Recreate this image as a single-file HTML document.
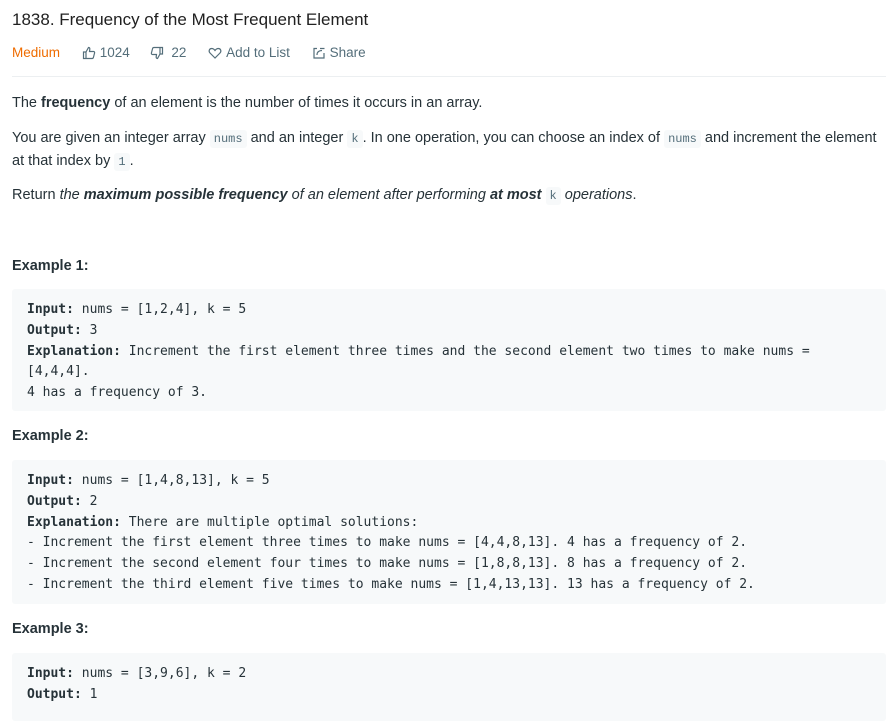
<!DOCTYPE html>
<html><head><meta charset="utf-8"><style>
body{margin:0;width:891px;height:721px;overflow:hidden;background:#fff;font-family:"Liberation Sans",sans-serif;color:#263238;}
.abs{position:absolute;}
.t{left:12px;top:10px;font-size:17px;font-weight:500;color:#212121;}
.meta{left:12px;top:45px;font-size:13.5px;color:#546e7a;display:flex;align-items:center;white-space:nowrap;}
.meta span{display:inline-flex;align-items:center;}
.sep{left:12px;top:76px;width:874px;height:1px;background:#eceff1;}
p{position:absolute;left:12px;margin:0;font-size:14.5px;line-height:22px;width:874px;}
code{font-family:"Liberation Mono",monospace;font-size:12px;background:#f7f9fa;color:#546e7a;padding:2px 4px;border-radius:3px;}
h4{position:absolute;left:12px;margin:0;font-size:14.5px;font-weight:bold;}
pre{position:absolute;left:12px;width:812px;margin:0;padding:11px 47px 7px 15px;background:#f7f9fa;font-family:"DejaVu Sans Mono",monospace;font-size:13px;line-height:20.8px;color:#263238;white-space:pre-wrap;border-radius:3px;}
pre b{font-weight:bold;}
</style></head><body>
<div class="abs t">1838. Frequency of the Most Frequent Element</div>
<div class="abs meta">
<span style="color:#ef6c00;margin-right:22px">Medium</span>
<span style="margin-right:20px"><svg width="14" height="14" viewBox="0 0 14 14" fill="none" stroke="#546e7a" stroke-width="1.2"><path d="M1.5 6h2.5v6.5H1.5z M4 6l2.5-4.5c1 0 1.5.7 1.3 1.7L7.5 5.5h4c.8 0 1.3.7 1.1 1.4l-1.2 4.6c-.2.6-.7 1-1.3 1H4"/></svg>&nbsp;1024</span>
<span style="margin-right:22px"><svg width="14" height="14" viewBox="0 0 14 14" fill="none" stroke="#546e7a" stroke-width="1.2"><path d="M12.5 8h-2.5V1.5h2.5z M10 8l-2.5 4.5c-1 0-1.5-.7-1.3-1.7L6.5 8.5h-4c-.8 0-1.3-.7-1.1-1.4l1.2-4.6c.2-.6.7-1 1.3-1H10"/></svg>&nbsp;&nbsp;22</span>
<span style="margin-right:22px"><svg width="14" height="14" viewBox="0 0 14 14" fill="none" stroke="#546e7a" stroke-width="1.2"><path d="M7 12L2 7C0.5 5.5 1 2.5 3.7 2.5 5.2 2.5 6.3 3.5 7 4.5 7.7 3.5 8.8 2.5 10.3 2.5 13 2.5 13.5 5.5 12 7z"/></svg>&nbsp;Add to List</span>
<span><svg width="14" height="14" viewBox="0 0 14 14" fill="none" stroke="#546e7a" stroke-width="1.2"><path d="M5 2.5H2v9.5h10V7 M8 2.5h4.5 M5 9c0-3 2-4.5 5-4.5"/></svg>&nbsp;Share</span>
</div>
<div class="abs sep"></div>
<p style="top:92px">The <b>frequency</b> of an element is the number of times it occurs in an array.</p>
<p style="top:127px">You are given an integer array <code>nums</code> and an integer <code>k</code>. In one operation, you can choose an index of <code>nums</code> and increment the element at that index by <code>1</code>.</p>
<p style="top:184px">Return <i>the <b>maximum possible frequency</b> of an element after performing <b>at most</b> </i><code>k</code><i> operations</i>.</p>
<h4 style="top:258px">Example 1:</h4>
<pre style="top:289px;height:104px"><b>Input:</b> nums = [1,2,4], k = 5
<b>Output:</b> 3
<b>Explanation:</b> Increment the first element three times and the second element two times to make nums =
[4,4,4].
4 has a frequency of 3.</pre>
<h4 style="top:428px">Example 2:</h4>
<pre style="top:460px;height:126px"><b>Input:</b> nums = [1,4,8,13], k = 5
<b>Output:</b> 2
<b>Explanation:</b> There are multiple optimal solutions:
- Increment the first element three times to make nums = [4,4,8,13]. 4 has a frequency of 2.
- Increment the second element four times to make nums = [1,8,8,13]. 8 has a frequency of 2.
- Increment the third element five times to make nums = [1,4,13,13]. 13 has a frequency of 2.</pre>
<h4 style="top:621px">Example 3:</h4>
<pre style="top:653px;height:50px"><b>Input:</b> nums = [3,9,6], k = 2
<b>Output:</b> 1</pre>
</body></html>
